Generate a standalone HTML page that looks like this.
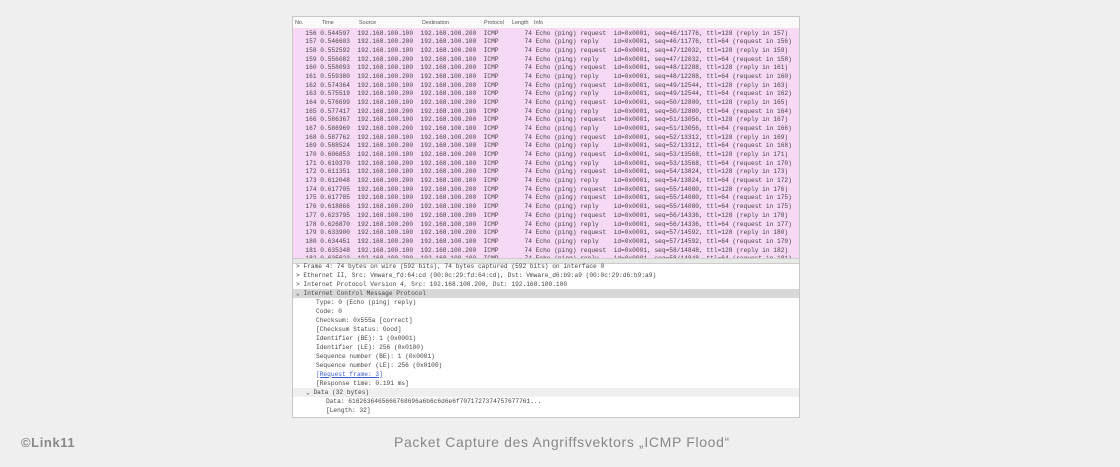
<!DOCTYPE html>
<html><head><meta charset="utf-8"><style>
body{margin:0;width:1120px;height:467px;background:#efefef;position:relative;overflow:hidden;font-family:"Liberation Sans",sans-serif}
#shot{position:absolute;left:292px;top:16px;width:508px;height:402px;background:#fff;border:1px solid #c8c8c8;box-sizing:border-box;overflow:hidden}
.m{font-family:"Liberation Mono",monospace;font-size:6.2px;color:#444;white-space:pre;position:absolute}
.hdr{position:absolute;left:0;top:0;width:100%;height:11px;background:#fafafa;border-bottom:1px solid #ddd;font-family:"Liberation Sans",sans-serif;font-size:5.4px;color:#555}
.hdr span{position:absolute;top:2.5px}
#list{position:absolute;left:0;top:11px;width:100%;height:230px;background:#f7d9f5;overflow:hidden}
.r{position:absolute;left:0;height:8.7px;width:100%}
.r span{position:absolute;top:1px}
#sep{position:absolute;left:0;top:241px;width:100%;height:4px;background:#e8e8e8;border-top:1px solid #ccc;border-bottom:1px solid #ccc}
.d{position:absolute;left:0;width:100%;height:9px}
.d span{position:absolute;top:1.2px}
#cap1{position:absolute;left:21px;top:435px;font-size:13px;color:#888;font-weight:bold;letter-spacing:0.6px}
#cap2{position:absolute;left:394px;top:434px;font-size:14px;color:#888;letter-spacing:0.65px}
</style></head><body>
<div id="shot">
<div class="hdr"><span style="left:2px">No.</span><span style="left:29px">Time</span><span style="left:66px">Source</span><span style="left:129px">Destination</span><span style="left:191px">Protocol</span><span style="left:219px">Length</span><span style="left:241px">Info</span></div>
<div id="list" class="m" style="position:absolute">
<div class="r" style="top:0.5px"><span style="left:5px">  156 0.544597  192.168.100.100  192.168.100.200  ICMP       74 Echo (ping) request  id=0x0001, seq=46/11776, ttl=128 (reply in 157)</span></div>
<div class="r" style="top:9.2px"><span style="left:5px">  157 0.546603  192.168.100.200  192.168.100.100  ICMP       74 Echo (ping) reply    id=0x0001, seq=46/11776, ttl=64 (request in 156)</span></div>
<div class="r" style="top:17.9px"><span style="left:5px">  158 0.552592  192.168.100.100  192.168.100.200  ICMP       74 Echo (ping) request  id=0x0001, seq=47/12032, ttl=128 (reply in 159)</span></div>
<div class="r" style="top:26.5px"><span style="left:5px">  159 0.556082  192.168.100.200  192.168.100.100  ICMP       74 Echo (ping) reply    id=0x0001, seq=47/12032, ttl=64 (request in 158)</span></div>
<div class="r" style="top:35.2px"><span style="left:5px">  160 0.558093  192.168.100.100  192.168.100.200  ICMP       74 Echo (ping) request  id=0x0001, seq=48/12288, ttl=128 (reply in 161)</span></div>
<div class="r" style="top:43.9px"><span style="left:5px">  161 0.559380  192.168.100.200  192.168.100.100  ICMP       74 Echo (ping) reply    id=0x0001, seq=48/12288, ttl=64 (request in 160)</span></div>
<div class="r" style="top:52.6px"><span style="left:5px">  162 0.574364  192.168.100.100  192.168.100.200  ICMP       74 Echo (ping) request  id=0x0001, seq=49/12544, ttl=128 (reply in 163)</span></div>
<div class="r" style="top:61.3px"><span style="left:5px">  163 0.575519  192.168.100.200  192.168.100.100  ICMP       74 Echo (ping) reply    id=0x0001, seq=49/12544, ttl=64 (request in 162)</span></div>
<div class="r" style="top:69.9px"><span style="left:5px">  164 0.576699  192.168.100.100  192.168.100.200  ICMP       74 Echo (ping) request  id=0x0001, seq=50/12800, ttl=128 (reply in 165)</span></div>
<div class="r" style="top:78.6px"><span style="left:5px">  165 0.577417  192.168.100.200  192.168.100.100  ICMP       74 Echo (ping) reply    id=0x0001, seq=50/12800, ttl=64 (request in 164)</span></div>
<div class="r" style="top:87.3px"><span style="left:5px">  166 0.586367  192.168.100.100  192.168.100.200  ICMP       74 Echo (ping) request  id=0x0001, seq=51/13056, ttl=128 (reply in 167)</span></div>
<div class="r" style="top:96px"><span style="left:5px">  167 0.586969  192.168.100.200  192.168.100.100  ICMP       74 Echo (ping) reply    id=0x0001, seq=51/13056, ttl=64 (request in 166)</span></div>
<div class="r" style="top:104.7px"><span style="left:5px">  168 0.587762  192.168.100.100  192.168.100.200  ICMP       74 Echo (ping) request  id=0x0001, seq=52/13312, ttl=128 (reply in 169)</span></div>
<div class="r" style="top:113.3px"><span style="left:5px">  169 0.588524  192.168.100.200  192.168.100.100  ICMP       74 Echo (ping) reply    id=0x0001, seq=52/13312, ttl=64 (request in 168)</span></div>
<div class="r" style="top:122px"><span style="left:5px">  170 0.606853  192.168.100.100  192.168.100.200  ICMP       74 Echo (ping) request  id=0x0001, seq=53/13568, ttl=128 (reply in 171)</span></div>
<div class="r" style="top:130.7px"><span style="left:5px">  171 0.610370  192.168.100.200  192.168.100.100  ICMP       74 Echo (ping) reply    id=0x0001, seq=53/13568, ttl=64 (request in 170)</span></div>
<div class="r" style="top:139.4px"><span style="left:5px">  172 0.611351  192.168.100.100  192.168.100.200  ICMP       74 Echo (ping) request  id=0x0001, seq=54/13824, ttl=128 (reply in 173)</span></div>
<div class="r" style="top:148.1px"><span style="left:5px">  173 0.612048  192.168.100.200  192.168.100.100  ICMP       74 Echo (ping) reply    id=0x0001, seq=54/13824, ttl=64 (request in 172)</span></div>
<div class="r" style="top:156.7px"><span style="left:5px">  174 0.617705  192.168.100.100  192.168.100.200  ICMP       74 Echo (ping) request  id=0x0001, seq=55/14080, ttl=128 (reply in 176)</span></div>
<div class="r" style="top:165.4px"><span style="left:5px">  175 0.617785  192.168.100.100  192.168.100.200  ICMP       74 Echo (ping) request  id=0x0001, seq=55/14080, ttl=64 (request in 175)</span></div>
<div class="r" style="top:174.1px"><span style="left:5px">  176 0.618866  192.168.100.200  192.168.100.100  ICMP       74 Echo (ping) reply    id=0x0001, seq=55/14080, ttl=64 (request in 175)</span></div>
<div class="r" style="top:182.8px"><span style="left:5px">  177 0.623795  192.168.100.100  192.168.100.200  ICMP       74 Echo (ping) request  id=0x0001, seq=56/14336, ttl=128 (reply in 178)</span></div>
<div class="r" style="top:191.5px"><span style="left:5px">  178 0.626870  192.168.100.200  192.168.100.100  ICMP       74 Echo (ping) reply    id=0x0001, seq=56/14336, ttl=64 (request in 177)</span></div>
<div class="r" style="top:200.1px"><span style="left:5px">  179 0.633900  192.168.100.100  192.168.100.200  ICMP       74 Echo (ping) request  id=0x0001, seq=57/14592, ttl=128 (reply in 180)</span></div>
<div class="r" style="top:208.8px"><span style="left:5px">  180 0.634451  192.168.100.200  192.168.100.100  ICMP       74 Echo (ping) reply    id=0x0001, seq=57/14592, ttl=64 (request in 179)</span></div>
<div class="r" style="top:217.5px"><span style="left:5px">  181 0.635348  192.168.100.100  192.168.100.200  ICMP       74 Echo (ping) request  id=0x0001, seq=58/14848, ttl=128 (reply in 182)</span></div>
<div class="r" style="top:226.2px"><span style="left:5px">  182 0.635623  192.168.100.200  192.168.100.100  ICMP       74 Echo (ping) reply    id=0x0001, seq=58/14848, ttl=64 (request in 181)</span></div>
</div>
<div id="sep"></div>
<div class="m" style="left:0;top:244px;width:100%;height:158px">
<div class="d" style="top:0.5px"><span style="left:3px">&gt; Frame 4: 74 bytes on wire (592 bits), 74 bytes captured (592 bits) on interface 0</span></div>
<div class="d" style="top:9.5px"><span style="left:3px">&gt; Ethernet II, Src: Vmware_fd:64:cd (00:0c:29:fd:64:cd), Dst: Vmware_d6:b9:a9 (00:0c:29:d6:b9:a9)</span></div>
<div class="d" style="top:18.5px"><span style="left:3px">&gt; Internet Protocol Version 4, Src: 192.168.100.200, Dst: 192.168.100.100</span></div>
<div class="d" style="top:27.5px;background:#d8d8d8"><span style="left:3px">&#8964; Internet Control Message Protocol</span></div>
<div class="d" style="top:36.5px"><span style="left:23px">Type: 0 (Echo (ping) reply)</span></div>
<div class="d" style="top:45.5px"><span style="left:23px">Code: 0</span></div>
<div class="d" style="top:54.5px"><span style="left:23px">Checksum: 0x555a [correct]</span></div>
<div class="d" style="top:63.5px"><span style="left:23px">[Checksum Status: Good]</span></div>
<div class="d" style="top:72.5px"><span style="left:23px">Identifier (BE): 1 (0x0001)</span></div>
<div class="d" style="top:81.5px"><span style="left:23px">Identifier (LE): 256 (0x0100)</span></div>
<div class="d" style="top:90.5px"><span style="left:23px">Sequence number (BE): 1 (0x0001)</span></div>
<div class="d" style="top:99.5px"><span style="left:23px">Sequence number (LE): 256 (0x0100)</span></div>
<div class="d" style="top:108.5px"><span style="left:23px;color:#3b5bd6;text-decoration:underline">[Request frame: 3]</span></div>
<div class="d" style="top:117.5px"><span style="left:23px">[Response time: 0.191 ms]</span></div>
<div class="d" style="top:126.5px;background:#efefef"><span style="left:13px">&#8964; Data (32 bytes)</span></div>
<div class="d" style="top:135.5px"><span style="left:33px">Data: 6162636465666768696a6b6c6d6e6f7071727374757677761...</span></div>
<div class="d" style="top:144.5px"><span style="left:33px">[Length: 32]</span></div>
</div>
</div>
<div id="cap1">©Link11</div>
<div id="cap2">Packet Capture des Angriffsvektors „ICMP Flood“</div>
</body></html>
